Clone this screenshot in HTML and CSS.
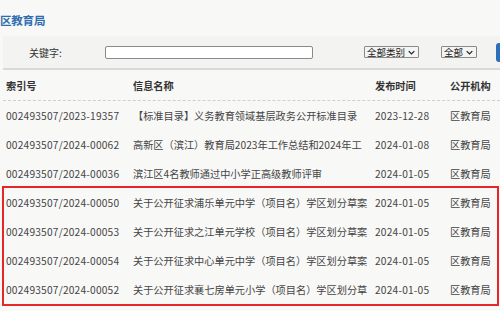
FILE: index.html
```html
<!DOCTYPE html>
<html lang="zh">
<head>
<meta charset="utf-8">
<link rel="stylesheet" href="styles.css">
</head>
<body>
<div class="page">
  <h1 class="title">区教育局</h1>
  <div class="search">
    <span class="kw-label">关键字:</span>
    <span class="kw-input"></span>
    <span class="sel sel-cat">全部类别<svg class="chev" viewBox="0 0 10 6"><path d="M1 1 L5 5 L9 1" fill="none" stroke="#222" stroke-width="1.8"/></svg></span>
    <span class="sel sel-all">全部<svg class="chev" viewBox="0 0 10 6"><path d="M1 1 L5 5 L9 1" fill="none" stroke="#222" stroke-width="1.8"/></svg></span>
    <span class="btn"></span>
  </div>
  <div class="table">
    <div class="row head">
      <span class="c-id">索引号</span>
      <span class="c-name">信息名称</span>
      <span class="c-date">发布时间</span>
      <span class="c-org">公开机构</span>
    </div>
    <div class="row">
      <span class="c-id">002493507/2023-19357</span>
      <span class="c-name">【标准目录】义务教育领域基层政务公开标准目录</span>
      <span class="c-date">2023-12-28</span>
      <span class="c-org">区教育局</span>
    </div>
    <div class="row">
      <span class="c-id">002493507/2024-00062</span>
      <span class="c-name">高新区（滨江）教育局2023年工作总结和2024年工</span>
      <span class="c-date">2024-01-08</span>
      <span class="c-org">区教育局</span>
    </div>
    <div class="row">
      <span class="c-id">002493507/2024-00036</span>
      <span class="c-name">滨江区4名教师通过中小学正高级教师评审</span>
      <span class="c-date">2024-01-05</span>
      <span class="c-org">区教育局</span>
    </div>
    <div class="marked">
      <div class="row">
        <span class="c-id">002493507/2024-00050</span>
        <span class="c-name">关于公开征求浦乐单元中学（项目名）学区划分草案</span>
        <span class="c-date">2024-01-05</span>
        <span class="c-org">区教育局</span>
      </div>
      <div class="row">
        <span class="c-id">002493507/2024-00053</span>
        <span class="c-name">关于公开征求之江单元学校（项目名）学区划分草案</span>
        <span class="c-date">2024-01-05</span>
        <span class="c-org">区教育局</span>
      </div>
      <div class="row">
        <span class="c-id">002493507/2024-00054</span>
        <span class="c-name">关于公开征求中心单元中学（项目名）学区划分草案</span>
        <span class="c-date">2024-01-05</span>
        <span class="c-org">区教育局</span>
      </div>
      <div class="row">
        <span class="c-id">002493507/2024-00052</span>
        <span class="c-name">关于公开征求襄七房单元小学（项目名）学区划分草</span>
        <span class="c-date">2024-01-05</span>
        <span class="c-org">区教育局</span>
      </div>
    </div>
  </div>
</div>
</body>
</html>
```

FILE: styles.css
```css
html, body {
  margin: 0;
  padding: 0;
  width: 500px;
  height: 311px;
  overflow: hidden;
  background: #f8f8f7;
}
.page {
  font-family: "Noto Sans CJK SC", "Noto Sans", sans-serif;
  color: #454545;
  font-size: 10.2px;
}
.title {
  margin: 0;
  height: 36px;
  padding-top: 10px;
  box-sizing: border-box;
  font-size: 11.5px;
  line-height: 20px;
  font-weight: bold;
  color: #2f6db0;
  letter-spacing: -0.2px;
}
.search {
  display: flex;
  align-items: center;
  height: 32px;
  background: #f3f3f2;
  border-bottom: 2px solid #d9d9d9;
  margin-left: 3px;
  font-size: 10px;
  color: #333;
  overflow: hidden;
  white-space: nowrap;
}
.search > * { flex-shrink: 0; }
.kw-label {
  margin-left: 26px;
  width: 76px;
}
.kw-input {
  width: 206px;
  height: 11px;
  border: 1px solid #8a8a8a;
  border-radius: 2px;
  background: #fff;
}
.sel {
  display: flex;
  align-items: center;
  height: 10px;
  line-height: 10px;
  padding: 0 1px 0 2px;
  border: 1px solid #8a8a8a;
  border-radius: 1px;
  background: #f4f4f4;
  font-size: 9.5px;
  color: #222;
}
.sel-cat { margin-left: 51px; }
.sel-all { margin-left: 22px; }
.chev {
  width: 7px;
  height: 5px;
  margin-left: 3px;
  margin-right: 2px;
}
.btn {
  margin-left: 19px;
  width: 20px;
  height: 19px;
  border-radius: 3px;
  background: #2f6fba;
}
.table {
  display: flex;
  flex-direction: column;
}
.row {
  display: flex;
  align-items: center;
  height: 29px;
  white-space: nowrap;
}
.row > * { flex-shrink: 0; }
.row.head {
  height: 30px;
  font-weight: bold;
  color: #333;
  border-bottom: 1px dashed #cfcfcf;
  margin-left: 3px;
}
.c-id {
  box-sizing: border-box;
  width: 133px;
  padding-left: 6px;
  letter-spacing: 0.2px;
}
.row.head .c-id { width: 130px; padding-left: 3px; letter-spacing: 0; }
.c-name {
  width: 236px;
  overflow: hidden;
}
.c-date {
  margin-left: 6px;
  width: 75px;
  letter-spacing: 0.2px;
}
.row.head .c-date { letter-spacing: 0; }
.marked {
  outline: 2px solid #e8262a;
  margin: 0 3px 0 4px;
}
.marked .c-id { width: 129px; padding-left: 2px; }
```
